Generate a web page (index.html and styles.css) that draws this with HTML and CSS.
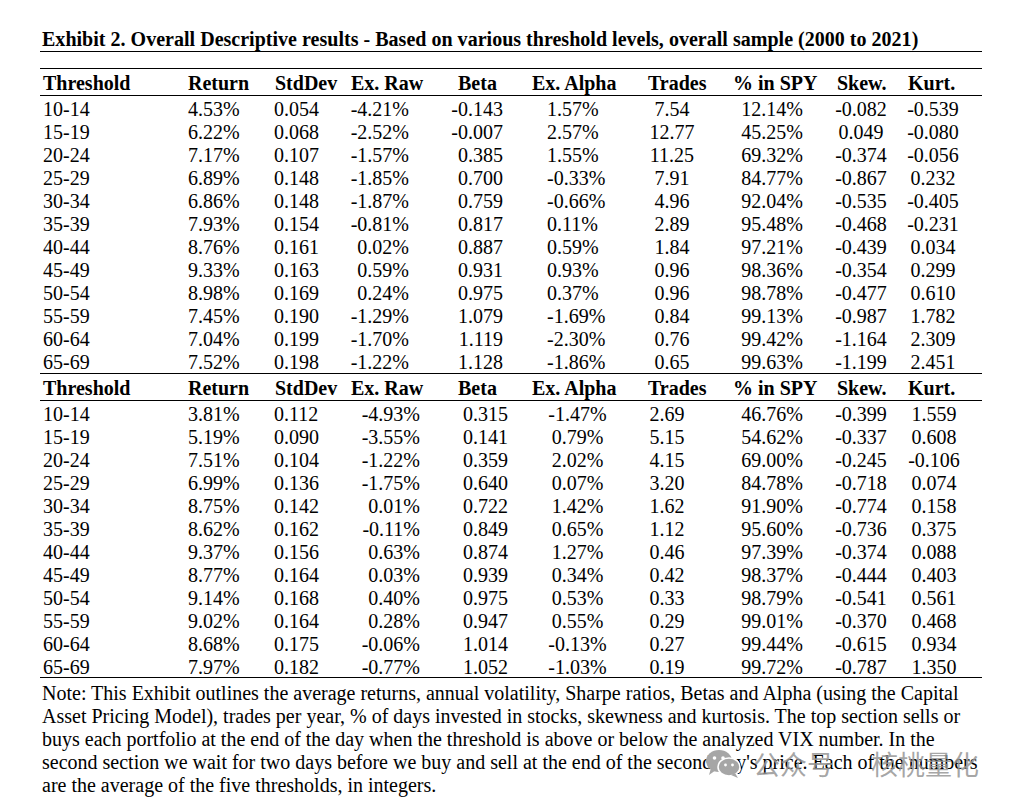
FILE: index.html
```html
<!DOCTYPE html>
<html>
<head>
<meta charset="utf-8">
<link rel="stylesheet" href="styles.css">
</head>
<body>
<div class="page">
  <h1 class="title">Exhibit 2. Overall Descriptive results - Based on various threshold levels, overall sample (2000 to 2021)</h1>
  <div class="table">
    <div class="row head first">
      <span>Threshold</span><span>Return</span><span>StdDev</span><span>Ex. Raw</span><span>Beta</span><span>Ex. Alpha</span><span>Trades</span><span>% in SPY</span><span>Skew.</span><span>Kurt.</span>
    </div>
    <div class="sec s1">
      <div class="row"><span>10-14</span><span>4.53%</span><span>0.054</span><span>-4.21%</span><span>-0.143</span><span>1.57%</span><span>7.54</span><span>12.14%</span><span>-0.082</span><span>-0.539</span></div>
      <div class="row"><span>15-19</span><span>6.22%</span><span>0.068</span><span>-2.52%</span><span>-0.007</span><span>2.57%</span><span>12.77</span><span>45.25%</span><span>0.049</span><span>-0.080</span></div>
      <div class="row"><span>20-24</span><span>7.17%</span><span>0.107</span><span>-1.57%</span><span>0.385</span><span>1.55%</span><span>11.25</span><span>69.32%</span><span>-0.374</span><span>-0.056</span></div>
      <div class="row"><span>25-29</span><span>6.89%</span><span>0.148</span><span>-1.85%</span><span>0.700</span><span>-0.33%</span><span>7.91</span><span>84.77%</span><span>-0.867</span><span>0.232</span></div>
      <div class="row"><span>30-34</span><span>6.86%</span><span>0.148</span><span>-1.87%</span><span>0.759</span><span>-0.66%</span><span>4.96</span><span>92.04%</span><span>-0.535</span><span>-0.405</span></div>
      <div class="row"><span>35-39</span><span>7.93%</span><span>0.154</span><span>-0.81%</span><span>0.817</span><span>0.11%</span><span>2.89</span><span>95.48%</span><span>-0.468</span><span>-0.231</span></div>
      <div class="row"><span>40-44</span><span>8.76%</span><span>0.161</span><span>0.02%</span><span>0.887</span><span>0.59%</span><span>1.84</span><span>97.21%</span><span>-0.439</span><span>0.034</span></div>
      <div class="row"><span>45-49</span><span>9.33%</span><span>0.163</span><span>0.59%</span><span>0.931</span><span>0.93%</span><span>0.96</span><span>98.36%</span><span>-0.354</span><span>0.299</span></div>
      <div class="row"><span>50-54</span><span>8.98%</span><span>0.169</span><span>0.24%</span><span>0.975</span><span>0.37%</span><span>0.96</span><span>98.78%</span><span>-0.477</span><span>0.610</span></div>
      <div class="row"><span>55-59</span><span>7.45%</span><span>0.190</span><span>-1.29%</span><span>1.079</span><span>-1.69%</span><span>0.84</span><span>99.13%</span><span>-0.987</span><span>1.782</span></div>
      <div class="row"><span>60-64</span><span>7.04%</span><span>0.199</span><span>-1.70%</span><span>1.119</span><span>-2.30%</span><span>0.76</span><span>99.42%</span><span>-1.164</span><span>2.309</span></div>
      <div class="row"><span>65-69</span><span>7.52%</span><span>0.198</span><span>-1.22%</span><span>1.128</span><span>-1.86%</span><span>0.65</span><span>99.63%</span><span>-1.199</span><span>2.451</span></div>
    </div>
    <div class="row head">
      <span>Threshold</span><span>Return</span><span>StdDev</span><span>Ex. Raw</span><span>Beta</span><span>Ex. Alpha</span><span>Trades</span><span>% in SPY</span><span>Skew.</span><span>Kurt.</span>
    </div>
    <div class="sec s2">
      <div class="row"><span>10-14</span><span>3.81%</span><span>0.112</span><span>-4.93%</span><span>0.315</span><span>-1.47%</span><span>2.69</span><span>46.76%</span><span>-0.399</span><span>1.559</span></div>
      <div class="row"><span>15-19</span><span>5.19%</span><span>0.090</span><span>-3.55%</span><span>0.141</span><span>0.79%</span><span>5.15</span><span>54.62%</span><span>-0.337</span><span>0.608</span></div>
      <div class="row"><span>20-24</span><span>7.51%</span><span>0.104</span><span>-1.22%</span><span>0.359</span><span>2.02%</span><span>4.15</span><span>69.00%</span><span>-0.245</span><span>-0.106</span></div>
      <div class="row"><span>25-29</span><span>6.99%</span><span>0.136</span><span>-1.75%</span><span>0.640</span><span>0.07%</span><span>3.20</span><span>84.78%</span><span>-0.718</span><span>0.074</span></div>
      <div class="row"><span>30-34</span><span>8.75%</span><span>0.142</span><span>0.01%</span><span>0.722</span><span>1.42%</span><span>1.62</span><span>91.90%</span><span>-0.774</span><span>0.158</span></div>
      <div class="row"><span>35-39</span><span>8.62%</span><span>0.162</span><span>-0.11%</span><span>0.849</span><span>0.65%</span><span>1.12</span><span>95.60%</span><span>-0.736</span><span>0.375</span></div>
      <div class="row"><span>40-44</span><span>9.37%</span><span>0.156</span><span>0.63%</span><span>0.874</span><span>1.27%</span><span>0.46</span><span>97.39%</span><span>-0.374</span><span>0.088</span></div>
      <div class="row"><span>45-49</span><span>8.77%</span><span>0.164</span><span>0.03%</span><span>0.939</span><span>0.34%</span><span>0.42</span><span>98.37%</span><span>-0.444</span><span>0.403</span></div>
      <div class="row"><span>50-54</span><span>9.14%</span><span>0.168</span><span>0.40%</span><span>0.975</span><span>0.53%</span><span>0.33</span><span>98.79%</span><span>-0.541</span><span>0.561</span></div>
      <div class="row"><span>55-59</span><span>9.02%</span><span>0.164</span><span>0.28%</span><span>0.947</span><span>0.55%</span><span>0.29</span><span>99.01%</span><span>-0.370</span><span>0.468</span></div>
      <div class="row"><span>60-64</span><span>8.68%</span><span>0.175</span><span>-0.06%</span><span>1.014</span><span>-0.13%</span><span>0.27</span><span>99.44%</span><span>-0.615</span><span>0.934</span></div>
      <div class="row"><span>65-69</span><span>7.97%</span><span>0.182</span><span>-0.77%</span><span>1.052</span><span>-1.03%</span><span>0.19</span><span>99.72%</span><span>-0.787</span><span>1.350</span></div>
    </div>
  </div>
  <p class="note">Note: This Exhibit outlines the average returns, annual volatility, Sharpe ratios, Betas and Alpha (using the Capital Asset Pricing Model), trades per year, % of days invested in stocks, skewness and kurtosis. The top section sells or buys each portfolio at the end of the day when the threshold is above or below the analyzed VIX number. In the second section we wait for two days before we buy and sell at the end of the second day's price. Each of the numbers are the average of the five thresholds, in integers.</p>
  <div class="wm">
    <svg class="wm-icon" width="36" height="30" viewBox="0 0 36 30">
      <ellipse cx="14" cy="12" rx="13" ry="11" fill="#a6a6a6"/>
      <path d="M6 19 L4 26 L11 21 Z" fill="#a6a6a6"/>
      <ellipse cx="24" cy="18" rx="11" ry="9" fill="#a6a6a6" stroke="#fff" stroke-width="1.5"/>
      <path d="M30 24 L33 29 L26 26 Z" fill="#a6a6a6"/>
      <circle cx="9.5" cy="9" r="1.8" fill="#fff"/>
      <circle cx="18" cy="9" r="1.8" fill="#fff"/>
      <circle cx="20.5" cy="16" r="1.4" fill="#fff"/>
      <circle cx="27.5" cy="16" r="1.4" fill="#fff"/>
    </svg>
    <span class="wm-a">公众号</span>
    <span class="wm-b">核桃量化</span>
  </div>
</div>
</body>
</html>
```
FILE: styles.css
```css
html, body {
  margin: 0;
  padding: 0;
  background: #fff;
}
.page {
  position: relative;
  width: 942px;
  padding: 28px 0 0 40px;
  font-family: "Liberation Serif", "Times New Roman", serif;
  font-size: 20px;
  color: #000;
}
.title {
  margin: 0;
  padding-left: 2px;
  font-size: 20px;
  font-weight: bold;
  line-height: 23px;
  height: 23px;
  border-bottom: 1px solid #000;
  white-space: nowrap;
  letter-spacing: 0.02px;
}
.table {
  margin-top: 16px;
}
.row {
  display: grid;
  grid-template-columns: 145px 85px 75px 95px 85px 105px 90px 100px 75px 87px;
  height: 23px;
  line-height: 23px;
}
.row > span {
  white-space: nowrap;
}
.head {
  height: 23px;
  padding-top: 3px;
  line-height: 23px;
  font-weight: bold;
  border-bottom: 1px solid #000;
}
.head.first {
  border-top: 1px solid #000;
}
.sec {
  padding-top: 2px;
  border-bottom: 1px solid #000;
}
.s1 { height: 275px; }
.s2 { height: 274px; }

/* header column offsets */
.head span:nth-child(1) { padding-left: 3px; }
.head span:nth-child(2) { padding-left: 3px; }
.head span:nth-child(3) { padding-left: 5px; }
.head span:nth-child(4) { padding-left: 6px; }
.head span:nth-child(5) { padding-left: 18px; }
.head span:nth-child(6) { padding-left: 7px; }
.head span:nth-child(7) { padding-left: 18px; }
.head span:nth-child(8) { padding-left: 13px; }
.head span:nth-child(9) { padding-left: 17px; }
.head span:nth-child(10) { padding-left: 13px; }

/* section 1 alignment */
.s1 .row span:nth-child(1) { padding-left: 3px; }
.s1 .row span:nth-child(2) { padding-left: 3px; }
.s1 .row span:nth-child(3) { padding-left: 4px; }
.s1 .row span:nth-child(4) { text-align: right; padding-right: 31px; }
.s1 .row span:nth-child(5) { text-align: right; padding-right: 22px; }
.s1 .row span:nth-child(6) { padding-left: 22px; }
.s1 .row span:nth-child(7) { text-align: center; padding-right: 6px; }
.s1 .row span:nth-child(8) { text-align: center; padding-left: 4px; }
.s1 .row span:nth-child(9) { text-align: center; padding-left: 7px; }
.s1 .row span:nth-child(10) { text-align: center; padding-right: 11px; }

/* section 2 alignment */
.s2 .row span:nth-child(1) { padding-left: 3px; }
.s2 .row span:nth-child(2) { padding-left: 3px; }
.s2 .row span:nth-child(3) { padding-left: 4px; }
.s2 .row span:nth-child(4) { text-align: right; padding-right: 20px; }
.s2 .row span:nth-child(5) { text-align: right; padding-right: 17px; }
.s2 .row span:nth-child(6) { text-align: center; }
.s2 .row span:nth-child(7) { text-align: center; padding-right: 16px; }
.s2 .row span:nth-child(8) { text-align: center; padding-left: 4px; }
.s2 .row span:nth-child(9) { text-align: center; padding-left: 7px; }
.s2 .row span:nth-child(10) { text-align: center; padding-right: 9px; }

.note {
  margin: 0;
  padding: 4px 0 0 2px;
  line-height: 23px;
  font-size: 20px;
}
.wm {
  position: absolute;
  left: 705px;
  top: 748px;
  display: flex;
  align-items: center;
  color: rgba(150, 150, 150, 0.85);
  font-family: "Noto Sans CJK SC", sans-serif;
  font-size: 27px;
  line-height: 32px;
}
.wm-icon {
  margin-right: 12px;
}
.wm-b {
  margin-left: 37px;
}
```
